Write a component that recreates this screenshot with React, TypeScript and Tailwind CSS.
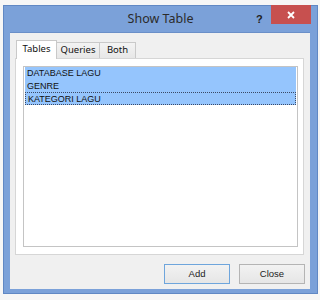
const TABS = [
  { label: "Tables", active: true, w: "w-[41px]" },
  { label: "Queries", active: false, w: "w-[43px]" },
  { label: "Both", active: false, w: "w-[36px]" },
];

const ROWS = ["DATABASE LAGU", "GENRE", "KATEGORI LAGU"];

export default function App() {
  return (
    <div className="w-[320px] h-[300px] bg-[#f6f6f6] pl-[3px] pt-[5px] overflow-hidden">
      <div className="w-[315px] h-[289px] bg-[#7ba1d9] border border-[#6088c4] flex flex-col">
        {/* title bar */}
        <div className="h-[26px] relative flex items-center justify-center">
          <span className="font-['Noto_Sans',sans-serif] text-[12.5px] text-[#2b2b2b] pt-[1px]">
            Show Table
          </span>
          <span className="absolute left-[252px] top-[5px] font-['Liberation_Sans',sans-serif] font-bold text-[11px] text-[#222]">
            ?
          </span>
          <div className="absolute right-[6px] top-[-1px] w-[40px] h-[19px] bg-[#c7504f] flex items-center justify-center">
            <svg width="8" height="8" viewBox="0 0 8 8">
              <path d="M1 1 L7 7 M7 1 L1 7" stroke="#fff" strokeWidth="1.8" />
            </svg>
          </div>
        </div>

        {/* client area */}
        <div className="ml-[6px] mr-[7px] flex-1 mb-[4px] bg-[#f0f0f0] border-t border-[#6a8fc8] pl-[5px] pr-[6px] pt-[7px] flex flex-col">
          {/* tabs */}
          <div className="flex items-end h-[19px] pl-[1px] relative z-10">
            {TABS.map((t) =>
              t.active ? (
                <div
                  key={t.label}
                  className={`${t.w} h-[19px] bg-white border border-b-0 border-[#c9c9c9] flex items-center justify-center font-['Noto_Sans',sans-serif] text-[9.5px] text-[#111] pb-[1px]`}
                >
                  {t.label}
                </div>
              ) : (
                <div
                  key={t.label}
                  className={`${t.w} h-[16px] mb-[1px] bg-gradient-to-b from-[#f3f3f3] to-[#e7e7e7] border border-l-0 border-b-0 border-[#c9c9c9] flex items-center justify-center font-['Noto_Sans',sans-serif] text-[9.5px] text-[#111]`}
                >
                  {t.label}
                </div>
              ),
            )}
          </div>

          {/* tab panel */}
          <div className="-mt-[1px] h-[197px] bg-white border border-[#d6d6d6] pl-[7px] pr-[5px] pt-[7px] pb-[7px]">
            <div className="h-full border border-[#c4c4c4] p-[1px] pt-0">
              <div className="bg-[#95c5fd] font-['Liberation_Sans',sans-serif] text-[9px] text-[#111]">
                {ROWS.map((r, i) => (
                  <div
                    key={r}
                    className={`h-[12.5px] leading-[12px] pl-[2px] ${
                      i === ROWS.length - 1 ? "border border-dotted border-[#3a4a66] pl-[1px] leading-[10px]" : ""
                    }`}
                  >
                    {r}
                  </div>
                ))}
              </div>
            </div>
          </div>

          {/* buttons */}
          <div className="flex justify-end gap-[9px] mt-[9px] pr-[0px]">
            <button className="w-[66px] h-[20px] border border-[#6ea5dc] bg-gradient-to-b from-[#f2f2f2] to-[#e6e6e6] font-['Liberation_Sans',sans-serif] text-[9.5px] text-[#222]">
              Add
            </button>
            <button className="w-[66px] h-[20px] border border-[#b4b4b4] bg-gradient-to-b from-[#f2f2f2] to-[#e6e6e6] font-['Liberation_Sans',sans-serif] text-[9.5px] text-[#222] -mr-[1px]">
              Close
            </button>
          </div>
        </div>
      </div>
    </div>
  );
}
